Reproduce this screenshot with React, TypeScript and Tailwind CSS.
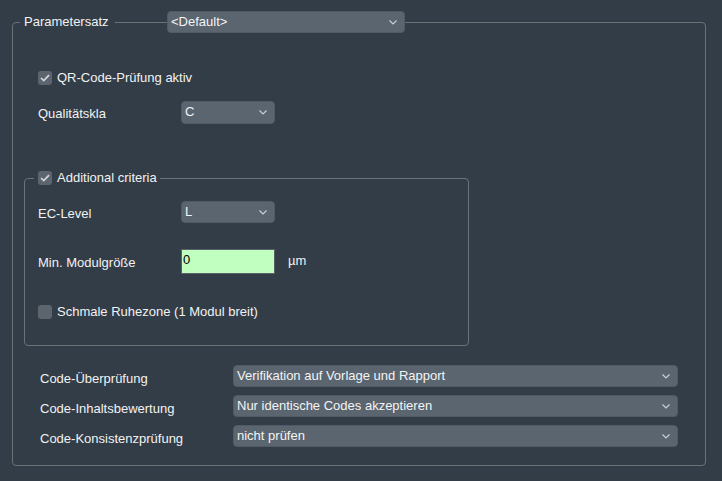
import React from 'react';

// Dark settings panel: QR code verification parameters

const FONT = "font-['Liberation_Sans',Arial,sans-serif]";

const Chevron: React.FC = () => (
  <svg width="8" height="5" viewBox="0 0 8 5" className="shrink-0">
    <path d="M0.5 0.5 L4 4 L7.5 0.5" fill="none" stroke="#c9ced3" strokeWidth="1.2" />
  </svg>
);

const Combo: React.FC<{ value: string; width: string; height?: string }> = ({ value, width, height = 'h-[22px]' }) => (
  <div
    className={`${width} ${height} shrink-0 flex items-center justify-between rounded-[4px] bg-[#5a6570] border border-[#4f5a64] pl-[3px] pr-[7px] text-[13px] leading-none text-[#f4f4f4]`}
  >
    <span className="-mt-[2px] whitespace-nowrap">{value}</span>
    <Chevron />
  </div>
);

const CheckBox: React.FC<{ checked?: boolean }> = ({ checked }) => (
  <div className="w-[14px] h-[14px] shrink-0 rounded-[3px] bg-[#5c656e] flex items-center justify-center">
    {checked && (
      <svg width="10" height="8" viewBox="0 0 10 8">
        <path d="M1 4 L3.8 6.6 L9 1.2" fill="none" stroke="#d3d7db" strokeWidth="1.7" />
      </svg>
    )}
  </div>
);

const ROWS = [
  { label: 'Code-Überprüfung', value: 'Verifikation auf Vorlage und Rapport' },
  { label: 'Code-Inhaltsbewertung', value: 'Nur identische Codes akzeptieren' },
  { label: 'Code-Konsistenzprüfung', value: 'nicht prüfen' },
];

export default function App() {
  return (
    <div className={`w-[722px] h-[481px] bg-[#333d47] overflow-hidden text-[13px] text-[#f2f2f2] ${FONT}`}>
      <fieldset className="ml-[12px] mt-[11px] w-[694px] border border-[#6c7176] rounded-[4px] pb-[18px]">
        <legend className="ml-[7px] flex items-center h-[22px]">
          <span className="w-[95px] pl-[4px] whitespace-nowrap">Parametersatz</span>
          <div className="w-[52px] h-px bg-[#6c7176]" />
          <Combo value="<Default>" width="w-[238px]" />
        </legend>

        {/* QR check */}
        <div className="mt-[38px] ml-[25px] h-[14px] flex items-center gap-[5px]">
          <CheckBox checked />
          <span className="whitespace-nowrap">QR-Code-Prüfung aktiv</span>
        </div>

        <div className="mt-[16px] ml-[25px] h-[23px] flex items-center">
          <span className="w-[143px] shrink-0 pt-[3px] whitespace-nowrap">Qualitätskla</span>
          <Combo value="C" width="w-[94px]" height="h-[23px]" />
        </div>

        {/* Additional criteria group */}
        <fieldset className="mt-[46px] ml-[11px] w-[445px] border border-[#6c7176] rounded-[4px] pb-[26px]">
          <legend className="ml-[9px] pl-[4px] pr-[3px] h-[16px] flex items-center gap-[5px]">
            <CheckBox checked />
            <span className="whitespace-nowrap">Additional criteria</span>
          </legend>

          <div className="mt-[15px] ml-[13px] h-[22px] flex items-center">
            <span className="w-[143px] shrink-0 pt-[3px]">EC-Level</span>
            <Combo value="L" width="w-[94px]" />
          </div>

          <div className="mt-[26px] ml-[13px] h-[25px] flex items-center">
            <span className="w-[143px] shrink-0 pt-[3px]">Min. Modulgröße</span>
            <div className="w-[94px] h-[25px] shrink-0 bg-[#c0ffc0] border border-[#5b6168] pl-[1px] text-black leading-none pt-[3px]">
              0
            </div>
            <span className="ml-[13px] -mt-[2px]">µm</span>
          </div>

          <div className="mt-[31px] ml-[13px] h-[14px] flex items-center gap-[5px]">
            <CheckBox />
            <span className="whitespace-nowrap">Schmale Ruhezone (1 Modul breit)</span>
          </div>
        </fieldset>

        <div className="mt-[19px] ml-[27px] flex flex-col gap-[8px]">
          {ROWS.map((r) => (
            <div key={r.label} className="h-[22px] flex items-center">
              <span className="w-[193px] shrink-0 pt-[4px] leading-none whitespace-nowrap">{r.label}</span>
              <Combo value={r.value} width="w-[445px]" />
            </div>
          ))}
        </div>
      </fieldset>
    </div>
  );
}
